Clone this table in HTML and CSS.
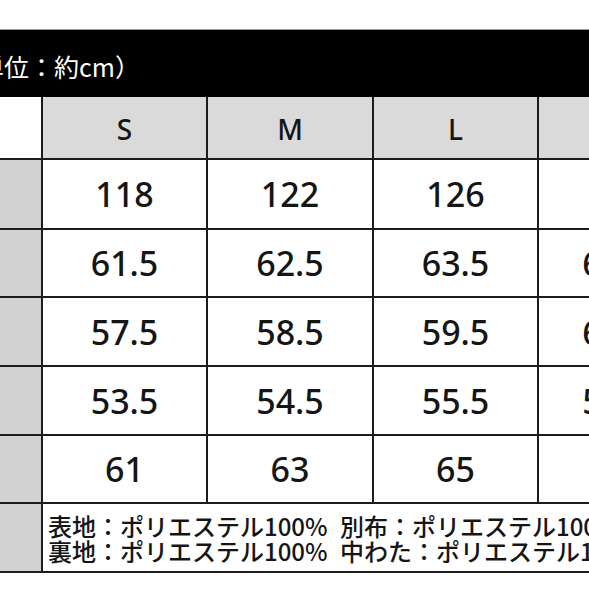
FILE: index.html
```html
<!DOCTYPE html>
<html lang="ja">
<head>
<meta charset="utf-8">
<link rel="stylesheet" href="styles.css">
</head>
<body>
<div class="page">
  <div class="bar"><span class="bar-text">単位：約cm）</span></div>
  <div class="table">
    <div class="cell corner"></div>
    <div class="cell head">S</div>
    <div class="cell head">M</div>
    <div class="cell head">L</div>
    <div class="cell head">XL</div>

    <div class="cell label"></div>
    <div class="cell num">118</div>
    <div class="cell num">122</div>
    <div class="cell num">126</div>
    <div class="cell num">130</div>

    <div class="cell label"></div>
    <div class="cell num">61.5</div>
    <div class="cell num">62.5</div>
    <div class="cell num">63.5</div>
    <div class="cell num">64.5</div>

    <div class="cell label"></div>
    <div class="cell num">57.5</div>
    <div class="cell num">58.5</div>
    <div class="cell num">59.5</div>
    <div class="cell num">60.5</div>

    <div class="cell label"></div>
    <div class="cell num">53.5</div>
    <div class="cell num">54.5</div>
    <div class="cell num">55.5</div>
    <div class="cell num">56.5</div>

    <div class="cell label"></div>
    <div class="cell num">61</div>
    <div class="cell num">63</div>
    <div class="cell num">65</div>
    <div class="cell num">67</div>

    <div class="cell label"></div>
    <div class="cell material">
      <div class="mat-line"><span class="mat-a">表地：ポリエステル100%</span><span class="mat-b">別布：ポリエステル100%</span></div>
      <div class="mat-line"><span class="mat-a">裏地：ポリエステル100%</span><span class="mat-b">中わた：ポリエステル100%</span></div>
    </div>
  </div>
</div>
</body>
</html>
```

FILE: styles.css
```css
html, body {
  margin: 0;
  padding: 0;
  background: #ffffff;
  overflow: hidden;
}

.page {
  width: 589px;
  height: 589px;
  overflow: hidden;
  padding-top: 29px;
  box-sizing: border-box;
}

.bar {
  height: 68px;
  background: #000000;
  border-top: 1px solid #9a9a9a;
  box-sizing: border-box;
  display: flex;
  align-items: center;
  padding-top: 6px;
  width: 720px;
}

.bar-text {
  margin-left: -21px;
  color: #ffffff;
  font-family: "Noto Sans CJK JP", "Noto Sans", sans-serif;
  font-size: 25px;
  line-height: 1;
  white-space: nowrap;
}

.table {
  display: grid;
  grid-template-columns: 41px 163px 164px 163px 154px;
  grid-template-rows: 61px 68px 66px 67px 67px 66px 67px;
  column-gap: 2px;
  row-gap: 2px;
  background: #1c1c1c;
  padding-bottom: 2px;
  width: 693px;
}

.cell {
  background: #ffffff;
  display: flex;
  align-items: center;
  justify-content: center;
  color: #151515;
  font-family: "Noto Sans", "Noto Sans CJK JP", sans-serif;
  font-weight: 500;
  white-space: nowrap;
  overflow: hidden;
}

.corner {
  background: #ffffff;
}

.head {
  background: #dadada;
  font-size: 28px;
  padding-top: 2px;
}

.label {
  background: #d2d2d2;
}

.num {
  font-size: 34px;
}

.material {
  grid-column: 2 / 6;
  flex-direction: column;
  align-items: flex-start;
  justify-content: center;
  padding-left: 5px;
  font-family: "Noto Sans CJK JP", sans-serif;
  font-size: 24px;
  line-height: 25px;
}

.mat-line {
  display: flex;
}

.mat-a {
  width: 292px;
}
```
